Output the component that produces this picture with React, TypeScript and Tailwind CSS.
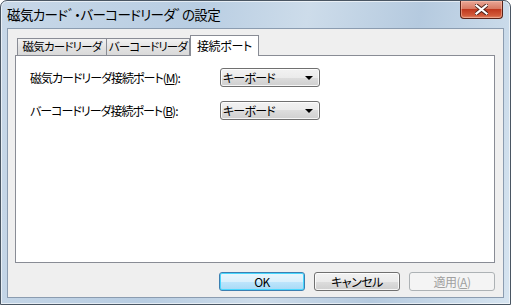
import React from "react";

const jp = "font-['Noto_Sans_CJK_JP','Noto_Sans',sans-serif] [font-feature-settings:'palt']";

function Combo() {
  return (
    <div className="w-[100px] h-[19px] rounded-[3px] border border-[#707070] bg-[linear-gradient(#f2f2f2,#ebebeb_50%,#dddddd_50%,#cfcfcf)] flex items-center pl-[2px] pr-[6px] shadow-[inset_0_0_0_1px_rgba(255,255,255,0.8)]">
      <span className="text-[12px] leading-none text-black tracking-[-0.8px] whitespace-nowrap">キーボード</span>
      <span className="ml-auto w-0 h-0 border-l-[4px] border-r-[4px] border-t-[4px] border-l-transparent border-r-transparent border-t-black" />
    </div>
  );
}

function Btn({ children, def, disabled }: { children: React.ReactNode; def?: boolean; disabled?: boolean }) {
  const cls = disabled
    ? "border-[#adb2b5] bg-[#f4f4f4] text-[#a0a0a0]"
    : def
    ? "border-[#3c7fb1] bg-[linear-gradient(#eaf6fd,#d9f0fc_50%,#bee6fd_50%,#a7d9f5)] text-black shadow-[inset_0_0_0_1px_#48d7fe]"
    : "border-[#707070] bg-[linear-gradient(#f2f2f2,#ebebeb_50%,#dddddd_50%,#cfcfcf)] text-black shadow-[inset_0_0_0_1px_rgba(255,255,255,0.8)]";
  return (
    <div className={`w-[86px] h-[19px] rounded-[3px] border flex items-center justify-center text-[12px] leading-none whitespace-nowrap tracking-[-0.5px] ${cls}`}>
      {children}
    </div>
  );
}

export default function App() {
  return (
    <div className={`w-[511px] h-[305px] ${jp} bg-white`}>
      <div className="w-[511px] h-[305px] rounded-t-[7px] border border-[#4a5663] bg-[linear-gradient(100deg,#c8d8e8_0%,#b8cde2_35%,#cddcea_55%,#b5cadf_75%,#d6e4f0_100%)] flex flex-col relative shadow-[inset_0_0_0_1px_rgba(255,255,255,0.6)]">
        <div className="h-[27px] flex items-center pl-[6px] shrink-0">
          <span className="text-[13.5px] leading-none text-black mt-[1px] tracking-[-0.6px] whitespace-nowrap">磁気カードﾞ・バーコードリーダﾞの設定</span>
        </div>
        <div className="absolute right-[7px] top-0 w-[43px] h-[18px] rounded-b-[4px] border border-t-0 border-[#5a2218] bg-[linear-gradient(#e9a797,#d87a63_45%,#c0391f_50%,#d25a3a_85%,#e08a6c)] flex items-center justify-center shadow-[inset_0_0_0_1px_rgba(255,200,180,0.5)]">
          <svg width="13" height="11" viewBox="0 0 13 11">
            <path d="M1.5 1.5 L11.5 9.5 M11.5 1.5 L1.5 9.5" stroke="#4a2018" strokeWidth="4" strokeLinecap="square" />
            <path d="M1.5 1.5 L11.5 9.5 M11.5 1.5 L1.5 9.5" stroke="#ffffff" strokeWidth="2.2" strokeLinecap="square" />
          </svg>
        </div>
        <div className="mx-[6px] h-[270px] border border-[#8b9cb0] bg-[#efefef] flex flex-col">
          <div className="pl-[7px] pt-[6px] pr-[8px] flex flex-col">
            <div className="flex items-end h-[20px] pl-[2px]">
              <div className="h-[17px] w-[90px] border border-b-0 border-[#898c95] bg-[linear-gradient(#f2f2f2,#e3e3e3_50%,#d9d9d9)] flex items-center justify-center text-[11.5px] leading-none tracking-[-0.8px] whitespace-nowrap">磁気カードリーダ</div>
              <div className="h-[17px] w-[83px] border border-b-0 border-l-0 border-[#898c95] bg-[linear-gradient(#f2f2f2,#e3e3e3_50%,#d9d9d9)] flex items-center justify-center text-[11.5px] leading-none tracking-[-0.8px] whitespace-nowrap">バーコードリーダ</div>
              <div className="h-[21px] w-[69px] -mb-[1px] relative z-10 border border-b-0 border-[#898c95] bg-white flex items-center justify-center text-[12px] leading-none tracking-[-0.3px] pb-[1px] whitespace-nowrap">接続ポート</div>
            </div>
            <div className="h-[208px] border border-[#898c95] bg-white flex flex-col pt-[12px] gap-[14px]">
              <div className="flex items-center">
                <span className="pl-[14px] w-[204px] text-[12px] leading-none tracking-[-1px] whitespace-nowrap">磁気カードリーダ接続ポート(<span className="underline">M</span>):</span>
                <Combo />
              </div>
              <div className="flex items-center">
                <span className="pl-[14px] w-[204px] text-[12px] leading-none tracking-[-1px] whitespace-nowrap">バーコードリーダ接続ポート(<span className="underline">B</span>):</span>
                <Combo />
              </div>
            </div>
          </div>
          <div className="flex justify-end gap-[9px] pr-[8px] pt-[9px]">
            <Btn def>OK</Btn>
            <Btn>キャンセル</Btn>
            <Btn disabled>
              適用(<span className="underline">A</span>)
            </Btn>
          </div>
        </div>
      </div>
    </div>
  );
}
